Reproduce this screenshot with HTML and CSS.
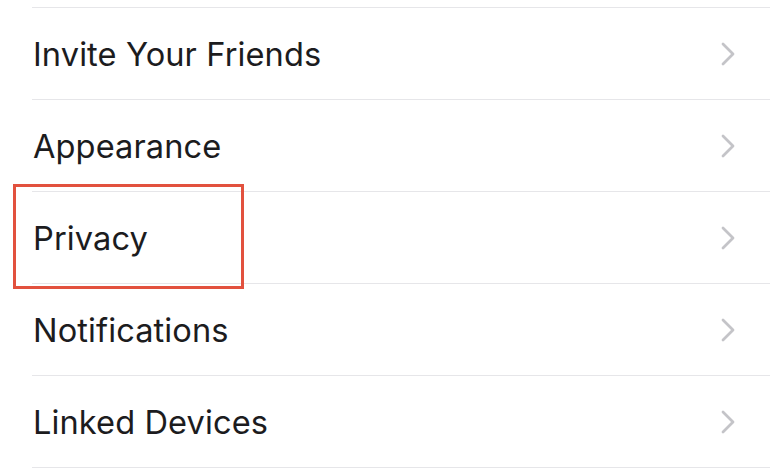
FILE: index.html
```html
<!DOCTYPE html>
<html lang="en">
<head>
	<meta charset="UTF-8">
	<title>Settings</title>
	<link rel="stylesheet" href="styles.css">
</head>
<body>
	<ul class="menu">
		<li class="row"><span class="label">Invite Your Friends</span><svg class="chev" viewBox="0 0 16 26"><path d="M3 3 L13 13 L3 23"/></svg></li>
		<li class="row"><span class="label">Appearance</span><svg class="chev" viewBox="0 0 16 26"><path d="M3 3 L13 13 L3 23"/></svg></li>
		<li class="row marked"><span class="label">Privacy</span><svg class="chev" viewBox="0 0 16 26"><path d="M3 3 L13 13 L3 23"/></svg><div class="mark"></div></li>
		<li class="row"><span class="label">Notifications</span><svg class="chev" viewBox="0 0 16 26"><path d="M3 3 L13 13 L3 23"/></svg></li>
		<li class="row"><span class="label">Linked Devices</span><svg class="chev" viewBox="0 0 16 26"><path d="M3 3 L13 13 L3 23"/></svg></li>
	</ul>
</body>
</html>
```

FILE: styles.css
```css
* { margin:0; padding:0; box-sizing:border-box; }
body { background:#fff; font-family:Inter, "Liberation Sans", sans-serif; color:#1c1c1e; overflow:hidden; }
.menu { list-style:none; margin:7px 0 0 32px; border-top:1px solid #e6e6e9; }
.row { position:relative; height:92px; border-bottom:1px solid #e6e6e9; display:flex; align-items:center; justify-content:space-between; padding:0 34px 0 1px; }
.label { font-size:32.6px; letter-spacing:0.1px; }
.chev { width:16px; height:26px; fill:none; stroke:#c4c4c8; stroke-width:2.8; stroke-linecap:round; stroke-linejoin:round; }
.mark { position:absolute; left:-19px; top:-8px; width:231px; height:105px; border:3px solid #e2513e; }
```
